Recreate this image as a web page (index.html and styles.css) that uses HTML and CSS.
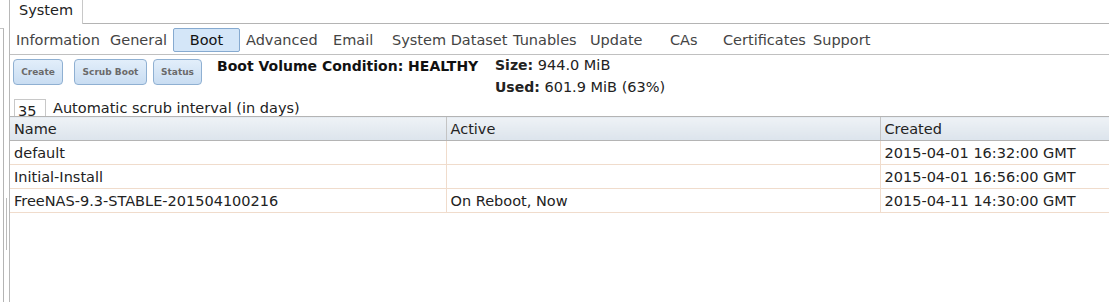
FILE: index.html
```html
<!DOCTYPE html>
<html lang="en">
<head>
  <meta charset="UTF-8">
  <title>System - Boot</title>
  <link rel="stylesheet" href="styles.css">
</head>
<body>

  <!-- Left pane (collapsed tree) -->
  <div class="side"></div>
  <div class="splitter"><span class="grip"></span></div>

  <!-- Main panel -->
  <div class="main">
    <div class="tabbar">
      <div class="tab">System</div>
      <div class="tabline"></div>
    </div>

    <div class="subtabs">
      <span class="st">Information</span>
      <span class="st">General</span>
      <span class="st active">Boot</span>
      <span class="st">Advanced</span>
      <span class="st">Email</span>
      <span class="st">System Dataset</span>
      <span class="st">Tunables</span>
      <span class="st">Update</span>
      <span class="st">CAs</span>
      <span class="st">Certificates</span>
      <span class="st">Support</span>
    </div>

    <div class="toolbar">
      <button class="btn">Create</button>
      <button class="btn wide">Scrub Boot</button>
      <button class="btn last">Status</button>
      <div class="condition">Boot Volume Condition: HEALTHY</div>
      <div class="stats">
        <div><b>Size:</b> 944.0 MiB</div>
        <div><b>Used:</b> 601.9 MiB (63%)</div>
      </div>
    </div>

    <div class="scrub">
      <span class="num">35</span>
      <span class="label">Automatic scrub interval (in days)</span>
    </div>

    <table class="grid">
      <thead>
        <tr><th class="c1">Name</th><th class="c2">Active</th><th>Created</th></tr>
      </thead>
      <tbody>
        <tr><td>default</td><td></td><td>2015-04-01 16:32:00 GMT</td></tr>
        <tr><td>Initial-Install</td><td></td><td>2015-04-01 16:56:00 GMT</td></tr>
        <tr><td>FreeNAS-9.3-STABLE-201504100216</td><td>On Reboot, Now</td><td>2015-04-11 14:30:00 GMT</td></tr>
      </tbody>
    </table>
  </div>

</body>
</html>
```

FILE: styles.css
```css
* { margin: 0; padding: 0; box-sizing: border-box; }
body { display: flex; height: 100vh; background: white; font-family: 'DejaVu Sans', Verdana, sans-serif; font-size: 14.5px; color: #222; overflow: hidden; }

/* left pane + splitter */
.side { width: 4px; margin-top: 28px; border-top: 1px solid #c4c4c4; border-right: 1px solid #b4b4b4; }
.splitter { width: 5px; position: relative; }
.grip { position: absolute; left: 2px; top: 198px; width: 1px; height: 52px; background: #bbb; }

.main { flex: 1; border-left: 1px solid #b8b8b8; min-width: 0; }

/* top tab */
.tabbar { display: flex; height: 24px; }
.tab { width: 73px; padding: 2px 0 0 9px; border-right: 1px solid #c8c8c8; }
.tabline { flex: 1; border-bottom: 1px solid #b4b4b4; }

/* sub tabs */
.subtabs { display: flex; align-items: center; height: 31px; padding: 1px 0 0 6px; border-bottom: 1px solid #c0c0c0; color: #444; }
.st { line-height: 22px; white-space: nowrap; }
.st:nth-child(1) { width: 94px; }
.st:nth-child(2) { width: 63px; }
.st:nth-child(4) { width: 87px; }
.st:nth-child(5) { width: 59px; }
.st:nth-child(6) { width: 121px; }
.st:nth-child(7) { width: 77px; }
.st:nth-child(8) { width: 80px; }
.st:nth-child(9) { width: 53px; }
.st:nth-child(10) { width: 90px; }
.st.active { width: 67px; margin-right: 6px; text-align: center; color: #111; background: #d4e6f8; border: 1px solid #86aad0; border-radius: 2px; }

/* toolbar */
.toolbar { display: flex; align-items: flex-start; padding: 4px 0 0 3px; height: 42px; }
.btn { height: 26px; width: 50px; margin-right: 11px; font-family: 'DejaVu Sans', sans-serif; font-size: 9px; font-weight: bold; color: #6a6a6a; background: linear-gradient(#e2eefa, #c9ddf2); border: 1px solid #8fb0d2; border-radius: 4px; }
.btn.wide { width: 73px; margin-right: 6px; }
.btn.last { width: 49px; margin-right: 15px; }
.condition { font-size: 14px; font-weight: bold; color: #111; width: 278px; margin-top: -1px; }
.stats { color: #222; line-height: 22px; margin-top: -5px; }
.stats b { font-size: 14px; }

/* scrub interval */
.scrub { display: flex; align-items: flex-start; height: 19px; padding-left: 4px; overflow: hidden; }
.num { width: 32px; height: 22px; padding: 3px 0 0 3px; margin: 2px 7px 0 0; border: 1px solid #c8c8c8; }
.label { margin-top: 3px; }

/* grid */
.grid { width: 100%; border-collapse: collapse; table-layout: fixed; }
.grid th { height: 24px; text-align: left; font-weight: normal; padding: 0 4px; background: linear-gradient(#eef2f6, #dce4ec); border-top: 1px solid #b4b4b4; border-bottom: 1px solid #b4b4b4; border-left: 1px solid #c4c4c4; }
.grid th:first-child { border-left: none; }
.grid .c1 { width: 436px; }
.grid .c2 { width: 434px; }
.grid td { height: 24px; padding: 0 4px; border-bottom: 1px solid #f0dccc; border-left: 1px solid #f0dccc; }
.grid td:first-child { border-left: none; }
```
